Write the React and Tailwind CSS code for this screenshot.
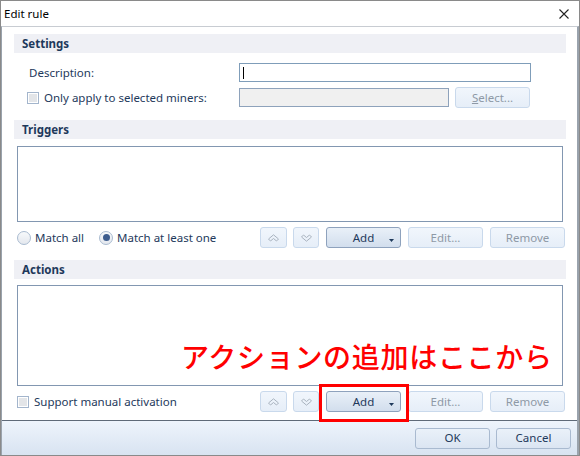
import React from 'react';

const ui = { fontFamily: '"Noto Sans", "DejaVu Sans", sans-serif' };

const UpIcon = () => (
  <svg width="11" height="8" viewBox="0 0 11 8">
    <path d="M0.5 5 L5.5 0.8 L10.5 5 L8.5 7 L5.5 4.5 L2.5 7 Z" fill="none" stroke="#a9b3bf" strokeWidth="1" />
  </svg>
);

const DownIcon = () => (
  <svg width="11" height="8" viewBox="0 0 11 8">
    <path d="M0.5 3 L5.5 7.2 L10.5 3 L8.5 1 L5.5 3.5 L2.5 1 Z" fill="none" stroke="#a9b3bf" strokeWidth="1" />
  </svg>
);

const Btn = ({ children, w = 'w-[75px]', disabled, className = '' }) => (
  <div
    className={`${w} h-[21px] flex items-center justify-center rounded-[3px] border text-[11.5px] ${
      disabled
        ? 'border-[#c9d9ec] bg-gradient-to-b from-[#f1f6fc] to-[#e6eef8] text-[#8e99a6]'
        : 'border-[#8ea2bd] bg-gradient-to-b from-[#e9f0f8] to-[#d2deed] text-[#1e395b]'
    } ${className}`}
  >
    {children}
  </div>
);

const Header = ({ title }) => (
  <div className="ml-[12px] w-[552px] h-[19px] bg-[#eff0f5] flex items-center pl-[8px]">
    <span className="text-[11.5px] font-bold text-[#1e395b]">{title}</span>
  </div>
);

const Checkbox = () => (
  <div className="w-[12px] h-[12px] border border-[#a3b5cc] bg-white p-[1px] shrink-0">
    <div className="w-full h-full bg-[#e3e5e8]" />
  </div>
);

const Radio = ({ checked }) => (
  <div className="w-[14px] h-[14px] shrink-0 rounded-full border border-[#a9bbd0] bg-gradient-to-b from-[#f7f9fb] to-[#e4e8ee] flex items-center justify-center">
    {checked && <div className="w-[7px] h-[7px] rounded-full bg-[#3d5d8e]" />}
  </div>
);

const ButtonRow = () => (
  <div className="flex items-center">
    <Btn w="w-[27px]" disabled><UpIcon /></Btn>
    <Btn w="w-[26px]" disabled className="ml-[6px]"><DownIcon /></Btn>
    <Btn className="ml-[7px] relative">
      <span>Add</span>
      <svg className="absolute right-[6px] top-[11px]" width="5" height="3" viewBox="0 0 5 3">
        <path d="M0 0 H5 L2.5 3 Z" fill="#1e395b" />
      </svg>
    </Btn>
    <Btn disabled className="ml-[7px]">Edit...</Btn>
    <Btn disabled className="ml-[7px]">Remove</Btn>
  </div>
);

const App = () => {
  return (
    <div className="w-[580px] h-[456px] relative bg-white border border-[#8a8a8a] flex flex-col overflow-hidden text-[#1e395b]" style={ui}>
      {/* Title bar */}
      <div className="h-[25px] flex items-center justify-between pl-[3px] pr-[10px] bg-white">
        <span className="text-[11.5px] text-black">Edit rule</span>
        <svg width="10" height="10" viewBox="0 0 10 10">
          <path d="M0.5 0.5 L9.5 9.5 M9.5 0.5 L0.5 9.5" stroke="#222" strokeWidth="1.1" />
        </svg>
      </div>

      {/* Body */}
      <div className="flex-1 flex flex-col border-t border-[#c8ccd2] border-l border-r-2 border-l-[#9aa3ad] border-r-[#9aa3ad]">
        <div className="h-[7px]" />
        <Header title="Settings" />

        <div className="flex items-center mt-[10px] h-[19px]">
          <span className="ml-[27px] w-[210px] shrink-0 text-[11.5px]">Description:</span>
          <div className="w-[292px] h-[19px] border border-[#7f9db9] bg-white flex items-center pl-[3px]">
            <div className="w-[1px] h-[12px] bg-black" />
          </div>
        </div>

        <div className="flex items-center mt-[5px] h-[21px]">
          <div className="ml-[25px]"><Checkbox /></div>
          <span className="ml-[5px] w-[195px] shrink-0 whitespace-nowrap text-[11.5px]">Only apply to selected miners:</span>
          <div className="w-[210px] h-[19px] border border-[#8ea2bb] bg-[#f0f0f0]" />
          <Btn disabled className="ml-[6px] h-[20px]">
            <span><span className="underline">S</span>elect...</span>
          </Btn>
        </div>

        <div className="h-[12px]" />
        <Header title="Triggers" />
        <div className="ml-[15px] mt-[7px] w-[546px] h-[76px] border border-[#8297b1] bg-white" />

        <div className="flex items-center mt-[5px] h-[21px]">
          <div className="ml-[15px] w-[82px] shrink-0 flex items-center">
            <Radio />
            <span className="ml-[4px] text-[11.5px] whitespace-nowrap">Match all</span>
          </div>
          <div className="w-[161px] shrink-0 flex items-center">
            <Radio checked />
            <span className="ml-[4px] text-[11.5px] whitespace-nowrap">Match at least one</span>
          </div>
          <ButtonRow />
        </div>

        <div className="h-[12px]" />
        <Header title="Actions" />
        <div className="ml-[15px] mt-[6px] w-[546px] h-[101px] border border-[#8297b1] bg-white" />

        <div className="flex items-center mt-[5px] h-[21px]">
          <div className="ml-[15px]"><Checkbox /></div>
          <span className="ml-[5px] w-[226px] shrink-0 whitespace-nowrap text-[11.5px]">Support manual activation</span>
          <ButtonRow />
        </div>

        <div className="flex-1" />

        {/* Footer */}
        <div className="h-[35px] border-t border-[#5f6a78] bg-gradient-to-b from-[#eef4fc] to-[#d8e3f1] flex items-center justify-end pr-[6px]">
          <Btn className="!border-[#a9bad0] !from-[#eaf1f9] !to-[#dbe5f2]">OK</Btn>
          <Btn className="ml-[6px] !border-[#a9bad0] !from-[#eaf1f9] !to-[#dbe5f2]">Cancel</Btn>
        </div>
      </div>

      {/* Annotation overlay */}
      <div
        className="absolute left-[180px] top-[341px] text-[28px] leading-none font-medium text-[#ff0000] tracking-[0.7px]"
        style={{ fontFamily: '"Noto Sans CJK JP", sans-serif' }}
      >
        アクションの追加はここから
      </div>
      <div className="absolute left-[318px] top-[383px] w-[90px] h-[38px] border-[3px] border-[#ff0000]" />
    </div>
  );
};

export default App;
